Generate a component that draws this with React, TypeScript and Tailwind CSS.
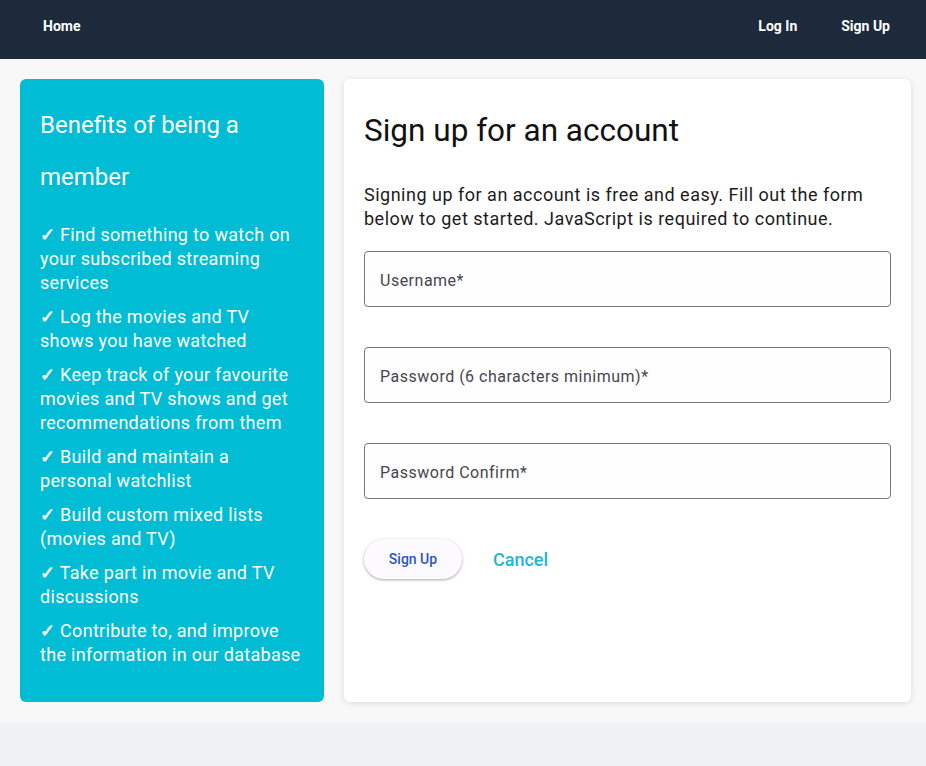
import React from "react";

const benefits = [
  "Find something to watch on your subscribed streaming services",
  "Log the movies and TV shows you have watched",
  "Keep track of your favourite movies and TV shows and get recommendations from them",
  "Build and maintain a personal watchlist",
  "Build custom mixed lists (movies and TV)",
  "Take part in movie and TV discussions",
  "Contribute to, and improve the information in our database",
];

function Field({ label }: { label: string }) {
  return (
    <div className="h-[56px] w-full rounded-[4px] border border-[#79747e] bg-[#fefefe] flex items-center px-[15px] pt-[3px]">
      <span className="text-[16px] tracking-[0.5px] text-[#49454f]">{label}</span>
    </div>
  );
}

export default function App() {
  return (
    <div className="min-h-[766px] flex flex-col bg-[#f0f1f5]" style={{ fontFamily: "Roboto, 'Liberation Sans', sans-serif" }}>
      <nav className="h-[59px] bg-[#1c2a3b] flex items-center justify-between pl-[43px] pr-[36px] pb-[6px]">
        <a className="text-[14px] font-bold text-white">Home</a>
        <div className="flex items-center gap-[44px]">
          <a className="text-[14px] font-bold text-white">Log In</a>
          <a className="text-[14px] font-bold text-white">Sign Up</a>
        </div>
      </nav>
      <main className="bg-[#f8f8f8] p-[20px] pr-[15px] flex gap-[20px]">
        <section className="w-[304px] h-[623px] shrink-0 rounded-[6px] bg-[#00bcd4] px-[20px] pt-[20px] text-white">
          <h2 className="text-[24px] leading-[52px] font-normal">Benefits of being a member</h2>
          <ul className="mt-[20px] flex flex-col gap-[10px]">
            {benefits.map((b) => (
              <li key={b} className="text-[18px] leading-[24px] tracking-[0.3px]">
                <span className="font-bold">✓</span> {b}
              </li>
            ))}
          </ul>
        </section>
        <section className="flex-1 h-[623px] rounded-[6px] bg-white shadow-[0_1px_6px_rgba(0,0,0,0.12)] px-[20px] pt-[20px]">
          <h1 className="mt-[12px] text-[31.5px] leading-[40px] text-[#111]">Sign up for an account</h1>
          <p className="mt-[32px] text-[18px] leading-[24px] tracking-[0.5px] text-[#1d1b20]">
            Signing up for an account is free and easy. Fill out the form below to get started. JavaScript is required to continue.
          </p>
          <div className="mt-[20px] flex flex-col gap-[40px]">
            <Field label="Username*" />
            <Field label="Password (6 characters minimum)*" />
            <Field label="Password Confirm*" />
          </div>
          <div className="mt-[40px] flex items-center gap-[32px]">
            <button className="h-[40px] w-[98px] rounded-full bg-[#fcfaff] text-[14px] font-medium text-[#2a55c4] shadow-[0_1px_3px_rgba(0,0,0,0.35)]">
              Sign Up
            </button>
            <a className="text-[18px] font-medium text-[#1fb7d1] -ml-[1px]">Cancel</a>
          </div>
        </section>
      </main>
      <footer className="h-[44px] bg-[#f0f1f5]" />
    </div>
  );
}
